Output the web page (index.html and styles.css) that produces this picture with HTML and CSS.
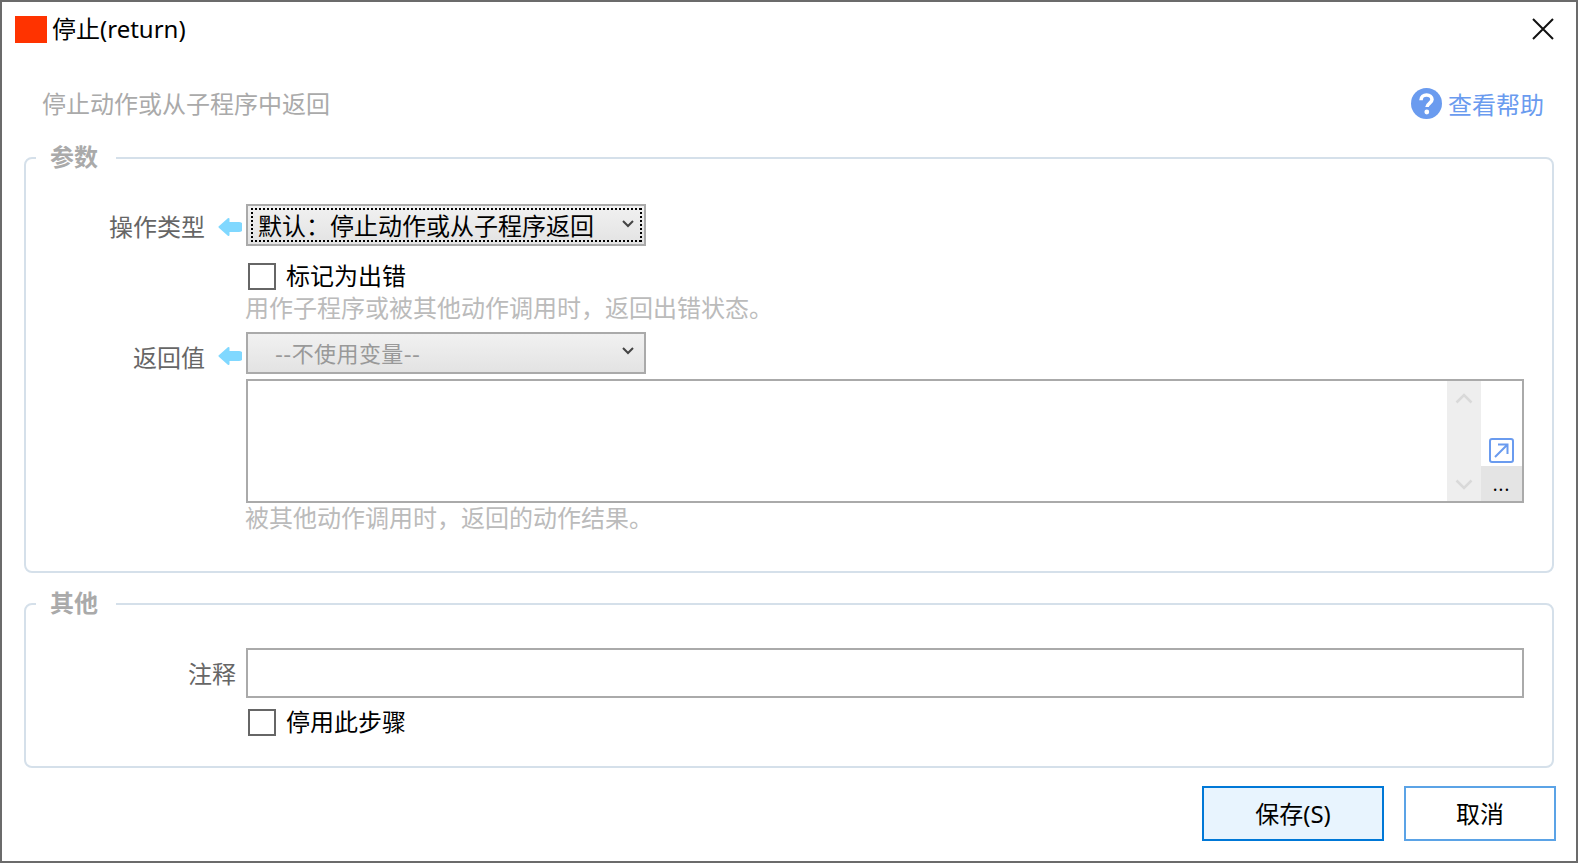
FILE: index.html
```html
<!DOCTYPE html>
<html lang="zh-CN">
<head>
    <meta charset="UTF-8">
    <title>停止(return)</title>
    <link rel="stylesheet" href="styles.css">
</head>
<body>
    <div class="dialog">
        <div class="titlebar">
            <span class="title-icon"></span>
            <span class="title-text">停止(return)</span>
            <svg class="close" width="22" height="22" viewBox="0 0 22 22">
                <path d="M1 1L21 21M21 1L1 21" stroke="#111" stroke-width="2" fill="none"/>
            </svg>
        </div>

        <div class="desc-row">
            <span class="desc">停止动作或从子程序中返回</span>
            <a class="help" href="#">
                <svg width="31" height="31" viewBox="0 0 31 31">
                    <circle cx="15.5" cy="15.5" r="15.5" fill="#6a9bef"/>
                    <path d="M10 12.2C10 8.8 12.5 7 15.6 7C18.8 7 21 8.9 21 11.6C21 15.2 16 15.5 16 19" stroke="#fff" stroke-width="3.6" fill="none"/>
                    <circle cx="15.8" cy="24" r="2.4" fill="#fff"/>
                </svg>
                <span class="help-text">查看帮助</span>
            </a>
        </div>

        <fieldset class="group group-params">
            <legend>参数</legend>

            <div class="row row-type">
                <label class="label">操作类型
                    <svg class="arrow" width="24" height="20" viewBox="0 0 24 20"><path d="M1.5 10L10.5 2V6H21A4 4 0 0 1 21 14H10.5V18Z" fill="#80d8ff" stroke="#80d8ff" stroke-width="2" stroke-linejoin="round"/></svg>
                </label>
                <div class="select focused">
                    <span>默认：停止动作或从子程序返回</span>
                    <svg class="chevron" width="12" height="8" viewBox="0 0 12 8"><path d="M1 1L6 6L11 1" stroke="#444" stroke-width="2" fill="none"/></svg>
                </div>
            </div>

            <div class="row row-check">
                <div></div>
                <label class="check"><input type="checkbox"><span>标记为出错</span></label>
            </div>
            <div class="row row-hint">
                <div></div>
                <p class="hint">用作子程序或被其他动作调用时，返回出错状态。</p>
            </div>

            <div class="row row-return">
                <label class="label">返回值
                    <svg class="arrow" width="24" height="20" viewBox="0 0 24 20"><path d="M1.5 10L10.5 2V6H21A4 4 0 0 1 21 14H10.5V18Z" fill="#80d8ff" stroke="#80d8ff" stroke-width="2" stroke-linejoin="round"/></svg>
                </label>
                <div class="select disabled">
                    <span>--不使用变量--</span>
                    <svg class="chevron" width="12" height="8" viewBox="0 0 12 8"><path d="M1 1L6 6L11 1" stroke="#444" stroke-width="2" fill="none"/></svg>
                </div>
            </div>

            <div class="row row-area">
                <div></div>
                <div class="editor">
                    <div class="editor-text"></div>
                    <div class="scroll">
                        <svg width="18" height="12" viewBox="0 0 18 12"><path d="M1.5 10.5L9 3L16.5 10.5" stroke="#d9d9d9" stroke-width="2.5" fill="none"/></svg>
                        <svg width="18" height="12" viewBox="0 0 18 12"><path d="M1.5 1.5L9 9L16.5 1.5" stroke="#d9d9d9" stroke-width="2.5" fill="none"/></svg>
                    </div>
                    <div class="editor-side">
                        <div class="expand">
                            <svg width="25" height="25" viewBox="0 0 25 25">
                                <rect x="1" y="1" width="23" height="23" rx="2" stroke="#6a9bef" stroke-width="2" fill="none"/>
                                <path d="M6 19L18 7M9 6.5H18.5V16" stroke="#6a9bef" stroke-width="2" fill="none"/>
                            </svg>
                        </div>
                        <div class="more">...</div>
                    </div>
                </div>
            </div>
            <div class="row row-result">
                <div></div>
                <p class="hint">被其他动作调用时，返回的动作结果。</p>
            </div>
        </fieldset>

        <fieldset class="group group-other">
            <legend>其他</legend>

            <div class="row row-note">
                <label class="label note-label">注释</label>
                <input class="note" type="text">
            </div>
            <div class="row row-check2">
                <div></div>
                <label class="check"><input type="checkbox"><span>停用此步骤</span></label>
            </div>
        </fieldset>

        <div class="footer">
            <button class="btn btn-save">保存(S)</button>
            <button class="btn btn-cancel">取消</button>
        </div>
    </div>
</body>
</html>
```

FILE: styles.css
```css
* {
    box-sizing: border-box;
}

html, body {
    height: 100%;
}

body {
    margin: 0;
    padding: 2px;
    background: #6b6b6b;
    overflow: hidden;
    font-family: "Noto Sans", "Noto Sans CJK SC", sans-serif;
    font-size: 24px;
    color: #000;
}

.dialog {
    height: 859px;
    background: #fff;
}

.titlebar {
    display: flex;
    align-items: center;
    height: 54px;
    padding: 0 22px 0 13px;
}

.title-icon {
    width: 32px;
    height: 27px;
    margin-top: 1px;
    background: #ff3300;
}

.title-text {
    margin-left: 5px;
    line-height: 32px;
}

.close {
    margin-left: auto;
}

.desc-row {
    display: flex;
    align-items: center;
    justify-content: space-between;
    height: 40px;
    margin-top: 27px;
    padding: 0 32px 0 40px;
}

.desc {
    margin-bottom: 2px;
    color: #aaa;
}

.help {
    display: flex;
    align-items: center;
    gap: 6px;
    color: #6a9bef;
    text-decoration: none;
}

.help-text {
    padding-top: 1px;
}

.group {
    margin: 0 22px;
    padding: 0;
    border: 2px solid #d5e0ea;
    border-radius: 8px;
}

.group legend {
    margin-left: 10px;
    padding: 0 18px 2px 14px;
    font-weight: 700;
    line-height: 30px;
    color: #aaa;
}

.group-params {
    height: 431px;
    margin-top: 19px;
}

.group-other {
    height: 180px;
    margin-top: 15px;
}

.row {
    display: grid;
    grid-template-columns: 220px 1278px;
}

.row-type {
    margin-top: 30px;
}

.row-type .arrow {
    margin-top: 4px;
}

.row-check {
    margin-top: 16px;
}

.row-hint {
    margin-top: 2px;
}

.row-return {
    margin-top: 8px;
}

.row-return .label {
    padding-top: 6px;
}

.row-area {
    margin-top: 5px;
}

.row-result {
    margin-top: -1px;
}

.row-note {
    margin-top: 28px;
}

.row-check2 {
    margin-top: 10px;
}

.label {
    display: flex;
    align-items: center;
    justify-content: flex-end;
    gap: 13px;
    padding-right: 4px;
    color: #666;
}

.note-label {
    padding: 0 10px 1px 0;
}

.select {
    position: relative;
    display: flex;
    align-items: center;
    justify-content: space-between;
    width: 400px;
    height: 42px;
    padding: 0 10px 2px 10px;
    border: 2px solid #aaa;
    background: linear-gradient(#f1f1f1, #e3e3e3);
}

/* dotted focus frame, square dots like the native one */
.select.focused::after {
    content: "";
    position: absolute;
    inset: 2px 2px 2px 3px;
    background:
        repeating-linear-gradient(90deg, #000 0 2px, transparent 2px 4px) top / 100% 2px no-repeat,
        repeating-linear-gradient(90deg, #000 0 2px, transparent 2px 4px) bottom / 100% 2px no-repeat,
        repeating-linear-gradient(#000 0 2px, transparent 2px 4px) left / 2px 100% no-repeat,
        repeating-linear-gradient(#000 0 2px, transparent 2px 4px) right / 2px 100% no-repeat;
}

.select.disabled {
    padding-left: 27px;
    font-family: "DejaVu Sans", "Noto Sans CJK SC", sans-serif;
    font-size: 22px;
    letter-spacing: 0.4px;
    color: #999;
}

.select.disabled .chevron {
    margin-bottom: 2px;
}

.check {
    display: flex;
    align-items: center;
    height: 28px;
    padding-left: 2px;
}

.check span {
    padding-bottom: 3px;
}

.check input {
    width: 28px;
    height: 27px;
    margin: 0 10px 0 0;
    border: 2px solid #666;
    background: #fff;
    appearance: none;
}

.hint {
    margin: 0 0 0 -1px;
    line-height: 32px;
    color: #bbb;
}

.editor {
    display: flex;
    height: 124px;
    border: 2px solid #aaa;
}

.editor-text {
    flex: 1;
}

.scroll {
    display: flex;
    flex-direction: column;
    align-items: center;
    justify-content: space-between;
    width: 34px;
    padding: 11px 0 10px;
    background: #eee;
}

.editor-side {
    display: flex;
    flex-direction: column;
    width: 41px;
}

.expand {
    display: flex;
    flex: 1;
    align-items: flex-end;
    justify-content: center;
    padding-bottom: 3px;
}

.more {
    height: 35px;
    line-height: 36px;
    font-size: 18px;
    letter-spacing: 1px;
    text-align: center;
    background: #e4e4e4;
}

.note {
    display: block;
    width: 100%;
    height: 50px;
    border: 2px solid #aaa;
    background: #fff;
}

.footer {
    display: flex;
    justify-content: flex-end;
    gap: 20px;
    margin-top: 18px;
    padding-right: 20px;
}

.btn {
    height: 55px;
    padding-bottom: 4px;
    border: 2px solid #0078d7;
    border-radius: 0;
    background: #fff;
    font: inherit;
    color: #000;
}

.btn-save {
    width: 182px;
    background: #e8f4fe;
}

.btn-cancel {
    width: 152px;
    border-color: #5ba3e6;
}
```
